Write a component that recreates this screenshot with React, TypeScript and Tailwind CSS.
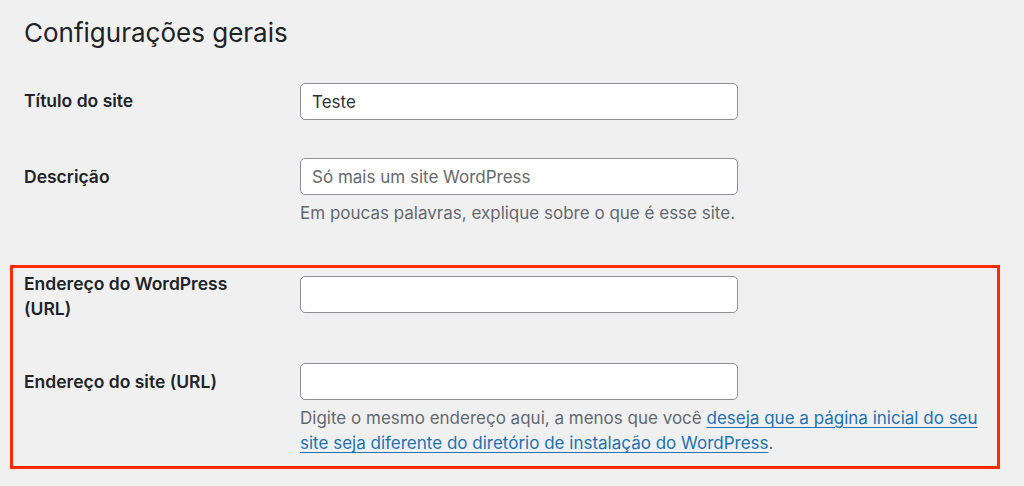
import React from "react";

export default function App() {
  const font = { fontFamily: "Inter, 'Noto Sans', sans-serif" };
  return (
    <div
      className="w-[1024px] h-[486px] bg-[#f0f0f1] overflow-hidden text-[#1d2327] antialiased"
      style={font}
    >
      <h1 className="ml-[24px] pt-[14px] text-[26px] leading-[37px] font-normal text-[#1d2327]">
        Configurações gerais
      </h1>

      {/* Row 1 */}
      <div className="flex items-start ml-[24px] mt-[32px]">
        <div className="w-[276px] pt-[6px] text-[17.5px] leading-[24px] font-semibold">
          Título do site
        </div>
        <input
          readOnly
          defaultValue="Teste"
          className="w-[438px] h-[37px] rounded-[5px] border border-[#8c8f94] bg-white px-[11px] text-[17px] text-[#2c3338] outline-none"
        />
      </div>

      {/* Row 2 */}
      <div className="flex items-start ml-[24px] mt-[38px]">
        <div className="w-[276px] pt-[7px] text-[17.5px] leading-[24px] font-semibold">
          Descrição
        </div>
        <div className="flex flex-col">
          <input
            readOnly
            placeholder="Só mais um site WordPress"
            className="w-[438px] h-[37px] rounded-[5px] border border-[#8c8f94] bg-white px-[11px] text-[17px] text-[#2c3338] placeholder:text-[#646970] outline-none"
          />
          <p className="mt-[6px] text-[17px] leading-[25px] text-[#646970]">
            Em poucas palavras, explique sobre o que é esse site.
          </p>
        </div>
      </div>

      {/* Highlighted box */}
      <div className="ml-[10px] mt-[39px] w-[990px] border-[3px] border-[#ff2a00] pl-[11px] pt-[8px] pb-[10px]">
        {/* Row 3 */}
        <div className="flex items-start">
          <div className="w-[250px] mr-[26px] -mt-[4px] text-[17.5px] leading-[24.5px] font-semibold">
            Endereço do WordPress (URL)
          </div>
          <input
            readOnly
            className="w-[438px] h-[37px] rounded-[5px] border border-[#8c8f94] bg-white px-[11px] text-[17px] outline-none"
          />
        </div>

        {/* Row 4 */}
        <div className="flex items-start mt-[42px]">
          <div className="w-[276px] pt-[7px] text-[17.5px] leading-[24px] font-semibold">
            Endereço do site (URL)
          </div>
          <div className="flex flex-col">
            <input
              readOnly
              className="w-[438px] h-[37px] rounded-[5px] border border-[#8c8f94] bg-white px-[11px] text-[17px] outline-none"
            />
            <p className="mt-[6px] whitespace-nowrap text-[17px] leading-[25px] text-[#646970]">
              Digite o mesmo endereço aqui, a menos que você{" "}
              <a href="#" className="text-[#2271b1] underline underline-offset-[3px]">
                deseja que a página inicial do seu
                <br />
                site seja diferente do diretório de instalação do WordPress
              </a>
              .
            </p>
          </div>
        </div>
      </div>
    </div>
  );
}
